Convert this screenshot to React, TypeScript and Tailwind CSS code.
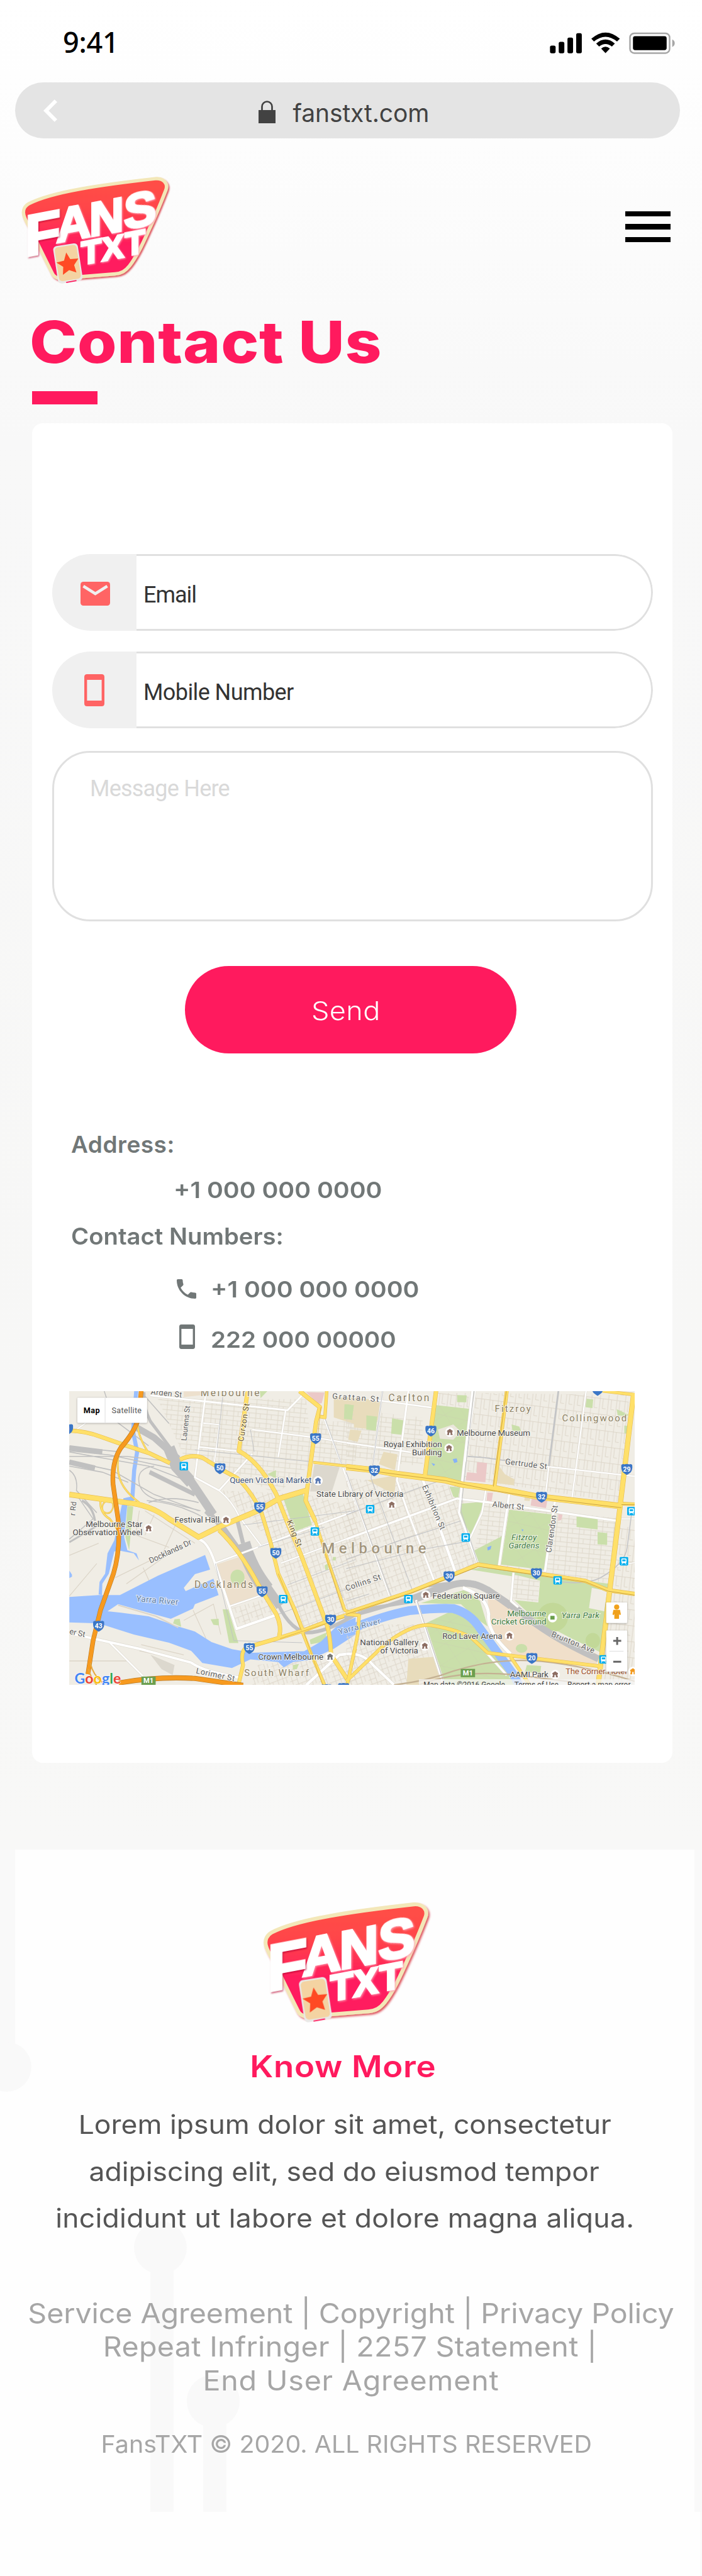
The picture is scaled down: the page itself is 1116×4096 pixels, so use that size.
import React from "react";

/* ---------- Brand badge ---------- */

const WHITE_LETTERS: [string, number, number, number][] = [
  ["A", 271, 477, 308],
  ["N", 484, 438, 308],
  ["S", 706, 391, 314],
  ["T", 432, 618, 209],
  ["X", 565, 594, 209],
  ["T", 714, 563, 209],
];

function Logo({ id, className }: { id: string; className: string }) {
  return (
    <svg viewBox="0 0 1050 780" className={className} role="img" aria-label="Fans TXT">
      <defs>
        <linearGradient id={`${id}-fill`} x1="0" y1="0" x2="0" y2="1">
          <stop offset="0.1" stopColor="#ff4d46" />
          <stop offset="0.3" stopColor="#ff4549" />
          <stop offset="0.68" stopColor="#ff1a5e" />
        </linearGradient>
        <filter id={`${id}-shadow`} x="-10%" y="-10%" width="125%" height="125%">
          <feDropShadow dx="8" dy="9" stdDeviation="5" floodColor="#d4202f" floodOpacity="0.75" />
        </filter>
        <filter id={`${id}-letters`} x="-20%" y="-20%" width="150%" height="150%">
          <feDropShadow dx="5" dy="8" stdDeviation="4" floodColor="#b8002e" floodOpacity="0.65" />
        </filter>
        <filter id={`${id}-glow`} x="-20%" y="-20%" width="150%" height="150%">
          <feDropShadow dx="5" dy="5" stdDeviation="5" floodColor="#ff9fb4" floodOpacity="0.9" />
        </filter>
      </defs>
      <path
        d="M96 226 C240 150 560 104 908 65 C962 60 992 98 976 138 C950 205 900 325 868 393 C835 465 800 550 742 626 C716 658 692 673 650 677 L290 706 C268 700 258 692 250 680 C215 610 160 500 112 398 C92 358 72 334 64 300 C56 268 70 240 96 226 Z"
        fill={`url(#${id}-fill)`}
        stroke="#f3e7b8"
        strokeWidth="22"
        filter={`url(#${id}-shadow)`}
      />
      <g fontFamily="'Liberation Sans', Arial, sans-serif" fontWeight="700" fill="#fff" stroke="#fff" strokeWidth="14">
        <g filter={`url(#${id}-glow)`}>
          {WHITE_LETTERS.map(([ch, x, y, size], i) => (
            <text key={i} transform={`matrix(1 -0.19 0 1 ${x} ${y})`} fontSize={size}>
              {ch}
            </text>
          ))}
        </g>
        <text transform="matrix(1 -0.19 0 1 71 563)" fontSize="376" filter={`url(#${id}-letters)`}>
          F
        </text>
      </g>
      <g transform="rotate(-8.8 347 610)">
        <rect x="267" y="488" width="160" height="243" rx="24" fill="#e9e9e7" />
        <rect x="276" y="497" width="142" height="220" rx="22" fill="#f4d3a2" />
      </g>
      <path d="M336 732 L402 720" stroke="#ff1a5e" strokeWidth="7" />
      <path
        d="M336 540 L362 582 L414 578 L387 620 L402 668 L355 653 L315 683 L317 631 L273 604 L322 592 Z"
        fill="#ff4a24"
      />
    </svg>
  );
}

/* ---------- Small icons ---------- */

function StatusIcons() {
  return (
    <svg viewBox="0 0 960 330" className="h-[82px] w-[238px]">
      <g fill="#000">
        <rect x="74" y="171" width="36" height="49" rx="11" />
        <rect x="130" y="147" width="36" height="73" rx="11" />
        <rect x="186" y="120" width="36" height="100" rx="11" />
        <rect x="242" y="91" width="36" height="129" rx="11" />
        <path d="M339 127 Q430 47 522 127 L504 145 Q430 84 356 145 Z" />
        <path d="M370 158 Q430 106 490 158 L471 177 Q430 144 389 177 Z" />
        <path d="M402 190 Q430 167 458 190 L430 219 Z" />
      </g>
      <rect x="587" y="92" width="254" height="127" rx="27" fill="none" stroke="#a6a6a6" strokeWidth="10" />
      <rect x="606" y="111" width="216" height="89" rx="14" fill="#000" />
      <path d="M858 132 Q874 140 874 156 Q874 172 858 180 Z" fill="#a6a6a6" />
    </svg>
  );
}

function PhoneDevice({ className }: { className: string }) {
  return (
    <svg viewBox="0 0 33 51" preserveAspectRatio="none" className={className} fill="currentColor">
      <path
        fillRule="evenodd"
        d="M4.5 0 H28.5 Q33 0 33 4.500 V46.500 Q33 51 28.500 51 H4.500 Q0 51 0 46.500 V4.500 Q0 0 4.500 0 Z M4.500 9 V42 H28.500 V9 Z"
      />
    </svg>
  );
}

/* ---------- Map ---------- */

type Pt = [number, number];
const westX = (x: number) => 140 + x * 0.39541;
const eastX = (x: number) => 740 + x * 0.40816;
const mapY = (y: number) => 2950 + y * 0.43367;
const W = (x: number, y: number): Pt => [westX(x), mapY(y)];
const E = (x: number, y: number): Pt => [eastX(x), mapY(y)];

const WEST = "translate(140 2950) scale(0.39541 0.43367)";
const EAST = "translate(740 2950) scale(0.40816 0.43367)";

type Road = [string, number];

const westWhite: Road[] = [
  ["M460 72 L1200 145 L1285 66", 10],
  ["M760 50 L700 475 L830 540 L1010 360", 10],
  ["M830 540 Q900 590 940 670 L1060 815", 8],
  ["M1190 145 L1150 375", 9],
  ["M720 325 L935 347", 8],
  ["M745 208 L832 216 L805 400", 7],
  ["M1010 240 L1350 280 L1568 312", 8],
  ["M725 782 Q770 795 805 890 L925 1222 L1150 1150", 14],
  ["M810 897 L950 850 L1568 640", 9],
  ["M890 1110 L1065 1055", 9],
  ["M1165 898 L1568 762", 8],
  ["M22 1243 L400 1320 L680 1388 Q740 1430 940 1462", 13],
  ["M240 1290 L420 1455", 9],
  ["M1300 1500 L1480 1350 L1568 1340", 15],
  ["M1395 178 L1500 430 L1568 610", 9],
  ["M60 240 L110 208", 7],
];

const westYellow: Road[] = [
  ["M22 245 Q110 248 190 275 L300 310 L450 355 L565 405", 18],
  ["M620 388 Q680 360 740 378 L850 440 L930 480 Q1010 550 1060 650 L1110 800 L1150 950 L1240 1130 L1285 1235", 18],
  ["M985 50 L937 345 Q1050 400 1140 560 L1200 700 L1270 850 L1400 1170 Q1430 1230 1435 1350 L1530 1480", 20],
  ["M1265 50 L1375 130 L1355 200 L1298 590 L1350 690", 20],
  ["M1350 690 L1420 890 L1510 1130 L1568 1155", 13],
  ["M1412 50 L1402 180 L1370 175", 15],
  ["M22 560 L330 600 Q460 610 560 680 L720 770 L830 720 L1040 640 L1155 580 L1300 540", 24],
  ["M830 735 Q940 830 1040 1000 L1140 1150 Q1170 1210 1155 1260", 20],
  ["M935 1498 L960 1400 Q940 1315 1000 1308 L1160 1265 L1280 1232 L1430 1180 L1568 1140", 18],
  ["M1280 1235 L1330 1350 L1400 1498", 15],
  ["M1340 402 L1568 425", 11],
  ["M385 220 L300 320 Q272 400 290 470 Q310 540 400 600", 7],
  ["M390 215 Q395 280 450 355", 7],
  ["M190 590 Q185 650 240 680 L280 730", 8],
  ["M228 592 Q262 590 258 622 Q250 655 222 652 Q196 645 200 620 Q205 595 228 592", 5],
  ["M1568 1320 L1520 1498", 12],
];

const eastWhite: Road[] = [
  ["M190 50 L140 410", 9],
  ["M325 50 L265 490 L320 640 L460 985", 11],
  ["M0 305 L340 352", 9],
  ["M660 50 L608 480 L590 650 L690 905", 12],
  ["M676 50 L624 400", 6],
  ["M0 780 L320 670 L580 580 L760 600 L1420 690", 11],
  ["M398 480 L570 940", 15],
  ["M855 540 L800 910", 13],
  ["M730 540 L710 650 L645 780", 9],
  ["M1095 570 L1040 940", 13],
  ["M1060 420 L1045 545", 8],
  ["M1255 50 L1180 585", 8],
  ["M1050 422 L1509 470", 8],
  ["M875 945 L862 1085 L900 1115", 11],
  ["M610 1020 Q735 1060 745 1150 Q735 1240 860 1345", 17],
  ["M365 1080 L510 1498", 11],
  ["M0 1345 Q90 1340 140 1400 L250 1498", 14],
  ["M120 90 L450 132", 9],
  ["M0 460 L225 1060", 7],
  ["M735 1340 L840 1450", 12],
  ["M1409 915 L1509 895", 6],
  ["M1440 680 L1509 680", 6],
];

const eastYellow: Road[] = [
  ["M470 50 L410 480", 20],
  ["M840 50 L775 525", 17],
  ["M0 425 L150 440 L270 460 L520 490 L610 512 L780 530 L1000 570 L1445 618", 28],
  ["M1440 605 L1509 608", 15],
  ["M1340 50 L1509 68", 13],
  ["M1504 60 L1430 640 L1380 1020 L1318 1498", 24],
  ["M0 1145 L340 1038 L690 905 L1250 985 L1370 1032 L1509 1050", 18],
  ["M0 1480 L200 1300 Q350 1190 450 1205 Q600 1230 660 1270 L740 1340 L1320 1405", 15],
  ["M68 1150 L60 1250 L5 1498", 15],
  ["M860 1360 L960 1498", 15],
  ["M0 1150 L70 1155", 14],
];

function Roads({ roads, color, casing }: { roads: Road[]; color: string; casing: string }) {
  return (
    <g fill="none" strokeLinejoin="round">
      {roads.map(([d, w], i) => (
        <path key={`c${i}`} d={d} stroke={casing} strokeWidth={w + 3} />
      ))}
      {roads.map(([d, w], i) => (
        <path key={`r${i}`} d={d} stroke={color} strokeWidth={w - 1} />
      ))}
    </g>
  );
}

const shields: [Pt, string][] = [
  [W(1352, 283), "55"],
  [W(835, 431), "50"],
  [W(1050, 623), "55"],
  [W(1137, 848), "50"],
  [W(1063, 1037), "55"],
  [W(180, 1207), "43"],
  [W(1433, 1177), "30"],
  [W(994, 1317), "55"],
  [W(1410, 1520), ""],
  [W(1503, 1514), "20"],
  [W(12, 238), "0"],
  [E(443, 246), "46"],
  [E(147, 442), "32"],
  [E(1022, 572), "32"],
  [E(1468, 435), "29"],
  [E(538, 963), "30"],
  [E(995, 948), "30"],
  [E(971, 1366), "20"],
  [E(1315, 45), ""],
];

const stations: Pt[] = [
  W(640, 420),
  W(1348, 742),
  W(1177, 1075),
  E(125, 632),
  E(625, 772),
  E(325, 1075),
  E(1106, 983),
  E(1453, 889),
  E(1492, 642),
  E(1346, 1372),
];

const places: [Pt, string][] = [
  [W(1365, 492), "#5b7bb4"],
  [W(868, 686), "#8d6e63"],
  [W(450, 727), "#8d6e63"],
  [W(1430, 1360), "#777777"],
  [E(542, 253), "#8d6e63"],
  [E(538, 332), "#8d6e63"],
  [E(238, 611), "#8d6e63"],
  [E(416, 1055), "#8d6e63"],
  [E(411, 1306), "#8d6e63"],
  [E(854, 1256), "#8d6e63"],
  [E(1093, 1447), "#8d6e63"],
  [E(1079, 1167), "#6a9f4b"],
  [E(1500, 1432), "#f29a1f"],
];

/* text, start, length, size, colour, style, angle */
type Label = [string, Pt, number, number, string, string?, number?];
const DARK = "#4c4c4c";
const TAN = "#8c7f62";
const STREET = "#5f5f5f";
const GREEN = "#3f7d3f";

const labels: Label[] = [
  ["Arden St", W(460, 66), 67, 17, STREET, "", 6],
  ["Melbourne", W(730, 75), 126, 21, TAN],
  ["Laurens St", W(654, 296), 75, 16, STREET, "", -84],
  ["Curzon St", W(962, 300), 82, 17, "#6d5a2a", "", -81],
  ["Grattan St", W(1441, 88), 100, 17, STREET, "", 4],
  ["Queen Victoria Market", W(888, 502), 175, 18, "#44597f"],
  ["State Library of Victoria", W(1356, 572), 186, 18, DARK],
  ["Festival Hall", W(590, 699), 96, 18, DARK],
  ["Melbourne Star", W(110, 720), 121, 18, DARK],
  ["Observation Wheel", W(40, 761), 149, 18, DARK],
  ["r Rd", W(52, 665), 30, 16, STREET, "", -84],
  ["Docklands Dr", W(460, 900), 98, 17, STREET, "", -25],
  ["King St", W(1196, 692), 60, 17, "#6d5a2a", "", 68],
  ["Docklands", W(697, 1020), 125, 21, TAN],
  ["Yarra River", W(382, 1086), 90, 18, "#5a7ba8", "", 5],
  ["er St", W(20, 1246), 34, 17, STREET, "", 12],
  ["Lorimer St", W(704, 1440), 84, 17, STREET, "", 12],
  ["Crown Melbourne", W(1042, 1374), 139, 18, DARK],
  ["South Wharf", W(966, 1453), 138, 20, TAN],
  ["Melbourne", W(1385, 850), 223, 32, "#a3967d", "bold"],
  ["Collins St", W(1518, 1036), 79, 17, STREET, "", -19],
  ["Yarra River", W(1480, 1250), 92, 17, "#5a7ba8", "", -15],
  ["Carlton", E(221, 99), 87, 21, TAN],
  ["Fitzroy", E(777, 154), 77, 20, TAN],
  ["Collingwood", E(1129, 199), 138, 20, TAN],
  ["Melbourne Museum", E(578, 270), 157, 18, DARK],
  ["Royal Exhibition", E(195, 325), 125, 18, DARK],
  ["Building", E(344, 367), 64, 18, DARK],
  ["Gertrude St", E(830, 410), 90, 17, STREET, "", 7],
  ["Exhibition St", E(396, 520), 102, 17, STREET, "", 67],
  ["Albert St", E(763, 620), 68, 17, STREET, "", 6],
  ["Fitzroy", E(864, 784), 54, 18, GREEN, "italic"],
  ["Gardens", E(849, 824), 66, 18, GREEN, "italic"],
  ["Clarendon St", E(1072, 848), 102, 17, STREET, "", -82],
  ["Federation Square", E(451, 1072), 144, 18, DARK],
  ["Melbourne", E(842, 1160), 83, 18, GREEN],
  ["Cricket Ground", E(758, 1200), 118, 18, GREEN],
  ["Yarra Park", E(1126, 1168), 81, 18, GREEN, "italic"],
  ["Rod Laver Arena", E(503, 1272), 128, 18, DARK],
  ["Brunton Ave", E(1070, 1258), 98, 17, STREET, "", 22],
  ["National Gallery", E(72, 1301), 125, 18, DARK],
  ["of Victoria", E(178, 1342), 81, 18, DARK],
  ["AAMI Park", E(857, 1461), 82, 18, DARK],
  ["The Corner Hotel", E(1147, 1446), 131, 18, "#a0522d"],
];

function CityMap() {
  return (
    <svg
      viewBox="148.300 2972 1207.700 627.500"
      preserveAspectRatio="none"
      className="block h-[467px] w-[899px]"
      fontFamily="Roboto, sans-serif"
    >
      <defs>
        <pattern id="grid-north" width="60" height="46" patternUnits="userSpaceOnUse" patternTransform="rotate(5)">
          <path d="M0 2 H60 M20 2 V46 M44 24 V46 M0 24 H60" stroke="#dcd5c8" strokeWidth="3" fill="none" />
        </pattern>
        <pattern id="grid-city" width="74" height="52" patternUnits="userSpaceOnUse" patternTransform="rotate(-19)">
          <path d="M0 2 H74 M0 30 H40 M12 2 V52 M40 2 V52 M58 2 V30" stroke="#dcd5c8" strokeWidth="3" fill="none" />
        </pattern>
        <pattern id="grid-dense" width="44" height="78" patternUnits="userSpaceOnUse" patternTransform="rotate(7)">
          <path d="M0 2 H44 M10 0 V78 M26 2 V50 M26 50 H44" stroke="#dcd5c8" strokeWidth="3" fill="none" />
        </pattern>
        <pattern id="grid-park" width="120" height="110" patternUnits="userSpaceOnUse" patternTransform="rotate(12)">
          <path d="M0 0 L120 110 M120 0 L0 110 M0 60 H120" stroke="#cbd5ae" strokeWidth="2" fill="none" />
        </pattern>
      </defs>
      <rect x="140" y="2960" width="1230" height="650" fill="#f0ede5" />

      {/* western half */}
      <g transform={WEST}>
        <path d="M500 90 L1300 90 L1340 400 L1140 560 L930 460 L640 370 Z" fill="url(#grid-north)" />
        <path d="M1340 200 L1568 200 L1568 420 L1340 400 Z" fill="url(#grid-north)" />
        <path d="M840 540 L1300 560 L1568 620 L1568 1140 L1280 1230 L1120 800 Z" fill="url(#grid-city)" />
        <path d="M900 1120 L1100 1070 L1130 1160 L930 1215 Z" fill="url(#grid-city)" />
        <path d="M1040 1400 L1568 1330 L1568 1498 L1000 1498 Z" fill="url(#grid-city)" />
        <path
          d="M270 970 L470 880 M330 1000 L640 800 M430 640 L700 800 M400 640 L380 760 L560 820 M420 920 L460 1000 M22 860 L180 800 M22 1060 L170 900 M600 700 L520 860 M480 660 L430 760 M22 1380 L340 1380 M410 1300 L640 1350 M400 1330 L600 1370 M640 1180 L800 1100 L840 1250 M690 1130 L760 1270"
          stroke="#dcd5c8"
          strokeWidth="4"
          fill="none"
        />
        <path d="M1450 78 L1568 90 L1568 215 L1450 180 Z" fill="#e8dcbc" />
        <path d="M1300 55 L1400 58 L1385 110 L1365 112 Z" fill="#ebc9c8" />
        <path d="M815 905 L940 868 L1010 960 L1060 1050 L890 1108 Z" fill="#ede0cd" />
        <path d="M1345 412 L1482 424 L1440 545 L1322 545 Z" fill="#dcd8ce" />
        <path d="M460 1350 L590 1400 L580 1450 L520 1420 Z" fill="#dcd8ce" />
        <path d="M640 52 L760 52 L740 70 L640 80 Z" fill="#ede0cd" />
        <g fill="#cadfaa">
          <path d="M1180 585 L1283 555 L1332 710 L1240 742 Z" />
          <circle cx="930" cy="968" r="38" />
          <path d="M850 1125 L880 1127 L935 1292 L885 1292 Z" />
          <path d="M590 1175 L618 1172 L626 1212 L582 1195 Z" />
          <path d="M335 615 L367 620 L358 700 L345 835 L325 770 Z" />
          <path d="M1090 460 L1138 440 L1138 480 Z" />
          <path d="M1320 1275 L1412 1240 L1402 1285 L1325 1298 Z" />
          <path d="M1050 50 L1092 50 L1055 85 Z" />
          <path d="M1508 115 L1550 118 L1548 192 L1505 188 Z" />
          <path d="M785 1175 L828 1172 L830 1205 L800 1202 Z" />
          <path d="M1400 910 L1418 900 L1420 930 L1405 932 Z" />
          <path d="M1445 868 L1462 868 L1460 885 L1445 885 Z" />
          <path d="M1230 1400 L1262 1395 L1250 1420 L1228 1422 Z" />
        </g>
        <g fill="#99bfff">
          <path d="M22 1065 L180 1055 L295 1055 L500 960 L755 858 L782 930 L700 952 L640 1020 L650 1036 L800 975 L828 1055 L700 1100 L690 1122 L570 1172 L480 1150 L285 1100 L228 1135 L300 1142 L450 1160 L610 1210 L700 1235 L790 1287 L900 1322 L1010 1340 L1290 1332 L1380 1285 L1470 1205 L1568 1165 L1568 1250 L1450 1320 L1320 1375 L1230 1385 L1180 1412 L1150 1385 L1000 1372 L900 1415 L740 1390 L680 1330 L560 1290 L370 1250 L180 1195 L22 1190 Z" />
          <path d="M305 612 L335 608 L318 770 L335 835 L385 850 L398 885 L370 850 L300 838 L265 840 L235 950 L200 1000 L198 1055 L180 1052 L185 990 L215 950 L228 850 L265 785 Z" />
          <path d="M22 935 L36 955 L36 965 L22 972 Z" />
        </g>
        <path d="M383 50 L366 250 L388 350 L372 440 L362 580 L315 590" stroke="#99bfff" strokeWidth="22" fill="none" />
        <path d="M285 1105 L490 1160 L610 1215" stroke="#dcd5c8" strokeWidth="6" fill="none" />
        {/* railway lands */}
        <g fill="none" stroke="#c0c0c0">
          <path
            d="M22 345 L240 365 L420 400 L620 440 M22 325 L300 350 M22 372 L330 372 L600 400 M22 395 L250 440 L480 560 L720 640 M22 420 L200 450 L340 500 M22 350 L200 380 L450 420 L620 480 M400 510 Q380 430 480 420 M400 510 Q420 580 560 600 L730 640 M450 600 Q560 560 720 600 M440 590 Q600 600 740 670 M22 440 Q70 470 60 540 L170 650 M210 50 L260 190 L450 320 M60 560 L150 680 L22 780 M415 60 L560 210"
            strokeWidth="5"
          />
          <path d="M22 330 L200 350 M22 400 L160 430" strokeWidth="26" />
          <path d="M90 590 Q150 620 160 690" strokeWidth="12" />
          <path d="M22 795 L170 715" strokeWidth="9" />
          <path d="M425 55 Q420 130 460 200 L600 370" strokeWidth="16" />
          <path d="M375 225 L480 280 L610 385" strokeWidth="34" />
          <path d="M560 330 L600 420 L680 500" strokeWidth="62" />
          <path d="M455 450 L700 560" strokeWidth="22" />
          <path d="M660 470 L800 660" strokeWidth="44" />
          <path d="M760 640 L850 720 L960 860" strokeWidth="28" />
          <path d="M930 690 L960 800" strokeWidth="22" />
          <path d="M960 800 Q1000 930 1090 1030" strokeWidth="78" />
          <path d="M1060 980 L1160 1110" strokeWidth="48" />
          <path d="M1130 1060 Q1200 1220 1300 1240 Q1400 1245 1568 1150" strokeWidth="18" />
        </g>
        <Roads roads={westWhite} color="#ffffff" casing="#dedad0" />
        <path
          d="M850 80 L820 330 M1400 180 L1500 430 M1000 240 L1020 350 M700 340 L1340 400 M960 710 L1568 640 M1040 820 L1400 720 M1150 1150 L1568 1010 M1350 700 L1500 1070 M810 900 L910 1280 L1280 1290 M1200 1005 L1568 880"
          stroke="#bfc1c4"
          strokeWidth="3"
          fill="none"
        />
        <Roads roads={westYellow} color="#ffe069" casing="#e6bc50" />
        <path
          d="M1380 130 L1360 300 M1380 780 L1500 1130 M1150 950 L1275 1230 M1160 1270 L1568 1148 M1290 1245 L1390 1498"
          stroke="#d7a93c"
          strokeWidth="2.500"
          fill="none"
        />
        <Roads
          roads={[
            ["M410 50 L398 170 Q385 240 300 330 Q250 400 258 510 L285 680 Q300 830 260 950 L190 1130 L150 1280 L122 1445", 22],
            ["M290 1488 Q500 1455 700 1466 L960 1500", 22],
          ]}
          color="#f79a1f"
          casing="#b97a25"
        />
        <path d="M135 1390 Q150 1450 200 1485 M125 1420 Q140 1470 170 1498" stroke="#e6a93c" strokeWidth="7" fill="none" />
      </g>

      {/* eastern half */}
      <g transform={EAST}>
        <path d="M0 140 L400 180 L400 420 L0 380 Z" fill="url(#grid-north)" />
        <path d="M0 480 L600 520 L680 900 L0 1120 Z" fill="url(#grid-city)" />
        <path d="M650 60 L1480 70 L1440 600 L620 480 Z" fill="url(#grid-dense)" />
        <path d="M480 60 L640 60 L640 140 L480 120 Z" fill="url(#grid-dense)" />
        <path d="M720 600 L1440 680 L1380 1000 L660 890 Z" fill="url(#grid-north)" />
        <path d="M880 960 L1005 980 L1000 1090 L870 1070 Z" fill="url(#grid-north)" />
        <path d="M1400 720 L1509 720 L1509 1498 L1340 1498 Z" fill="url(#grid-dense)" />
        <path d="M0 1200 L400 1200 L460 1498 L0 1498 Z" fill="url(#grid-city)" />
        <g fill="#e8dcbc">
          <path d="M40 85 L180 95 L165 190 L140 240 L40 230 Z" />
          <path d="M0 80 L40 85 L40 120 L0 115 Z" />
          <path d="M110 490 L262 465 L252 560 Z" />
          <path d="M195 350 L268 362 L255 440 L170 410 Z" />
          <path d="M20 240 L80 245 L60 300 L10 290 Z" />
          <path d="M800 420 L830 460 L880 485 L878 515 L790 505 Z" />
          <path d="M325 1370 L455 1360 L500 1498 L315 1498 Z" />
          <path d="M935 560 L965 565 L960 592 L932 590 Z" />
        </g>
        <g fill="#ebc9c8">
          <path d="M685 400 L737 405 L728 500 L625 490 L632 450 L682 455 Z" />
          <path d="M970 578 L1052 590 L1045 627 L965 615 Z" />
          <path d="M738 550 L768 552 L760 595 L735 590 Z" />
          <path d="M1110 655 L1132 660 L1125 685 L1108 690 Z" />
        </g>
        <path d="M740 1075 L870 1090 L1000 1200 L1310 1345 L1312 1400 L860 1350 L755 1240 Z" fill="#f0dfca" />
        <g fill="#cadfaa">
          <path d="M470 120 L648 138 L606 495 L420 462 Z" />
          <path d="M600 605 L722 595 L655 765 L595 665 Z" />
          <path d="M540 520 L595 525 L585 580 L560 570 Z" />
          <path d="M665 838 L815 765 L802 912 L690 900 Z" />
          <path d="M852 635 L1075 658 L1042 932 L810 905 Z" />
          <path d="M1205 668 L1316 680 L1315 732 L1205 720 Z" />
          <path d="M1315 745 L1365 750 L1365 808 L1315 805 Z" />
          <path d="M240 185 L300 195 L290 266 L235 260 Z" />
          <path d="M105 170 L162 176 L155 246 L105 240 Z" />
          <path d="M0 115 L40 120 L30 192 L0 188 Z" />
          <path d="M580 70 L630 72 L628 106 L580 105 Z" />
          <path d="M1258 88 L1292 92 L1288 134 L1252 130 Z" />
          <path d="M1415 140 L1475 165 L1470 175 L1420 170 Z" />
          <path d="M1455 220 L1478 222 L1475 260 L1455 258 Z" />
          <path d="M865 215 L905 225 L915 248 L870 245 Z" />
          <path d="M650 930 L1015 985 L1005 1092 L880 1080 L1000 1185 L1330 1335 L1370 1000 L1000 950 L700 920 Z" />
          <path d="M1015 975 L1370 1000 L1325 1335 L1180 1270 L1000 1180 Z" />
          <path d="M415 1195 L560 1130 L700 1210 L840 1400 L890 1498 L520 1498 Z" />
          <path d="M390 1095 L620 1030 L700 1085 L740 1210 L680 1170 L600 1100 Z" />
          <path d="M945 1400 L1020 1405 L1015 1440 L935 1435 Z" />
        </g>
        <path d="M415 1195 L560 1130 L700 1210 L840 1400 L890 1498 L520 1498 Z" fill="url(#grid-park)" />
        <path d="M470 120 L648 138 L606 495 L420 462 Z" fill="url(#grid-park)" />
        <path d="M852 635 L1075 658 L1042 932 L810 905 Z" fill="url(#grid-park)" />
        <path d="M880 955 L1012 985 L1002 1090 L872 1070 Z" fill="#f0ede5" />
        <path d="M880 955 L1012 985 L1002 1090 L872 1070 Z" fill="url(#grid-north)" />
        <path d="M480 240 L560 215 L600 250 L560 290 L490 285 Z" fill="#ebe7dc" />
        <path d="M1285 1020 L1365 1035 L1350 1135 L1270 1120 Z" fill="#f0ede5" />
        <ellipse cx="1080" cy="1165" rx="80" ry="72" fill="#c2d898" />
        <circle cx="1290" cy="1280" r="38" fill="#c2d898" />
        <ellipse cx="917" cy="1318" rx="30" ry="22" fill="#cadfaa" />
        <g fill="#86b1f7">
          <path d="M557 385 L578 382 L582 400 L565 405 Z" />
          <path d="M445 405 L465 410 L458 420 Z" />
          <path d="M738 820 L760 812 L755 830 L740 836 Z" />
          <path d="M918 730 L928 735 L920 742 Z" />
        </g>
        <path
          d="M-10 1235 Q180 1160 330 1132 Q480 1118 560 1122 Q650 1145 700 1220 L870 1440 L905 1500"
          stroke="#99bfff"
          strokeWidth="44"
          fill="none"
        />
        <g fill="none" stroke="#c0c0c0">
          <path d="M-10 1165 Q200 1120 400 1045 Q560 980 680 995" strokeWidth="18" />
          <path d="M350 1080 L540 1010 Q640 975 740 1030 L860 1110" strokeWidth="34" />
          <path d="M740 1030 L900 1130 Q1060 1260 1320 1370" strokeWidth="34" />
          <path d="M430 1010 L620 990 M60 1130 L330 1090" strokeWidth="16" />
        </g>
        <Roads roads={eastWhite} color="#ffffff" casing="#dedad0" />
        <g fill="none" stroke="#c3c4c6" strokeWidth="3.500">
          <path d="M1110 50 L1060 420" strokeWidth="9" />
          <path d="M635 372 L720 378 L850 395" strokeWidth="6" />
          <path d="M190 50 L130 480 L345 1030 M0 660 L400 520 L500 490 M0 925 L400 830 L640 790 M600 690 L300 780 L0 880 M668 50 L600 640 L690 905 M370 1085 L515 1498 M0 1085 L120 1050 M0 450 L40 560 L235 1060" />
          <path d="M1080 985 Q1250 1010 1330 970 Q1460 900 1470 820 L1492 660" strokeWidth="5" />
        </g>
        <path
          d="M250 1498 Q420 1480 560 1430 Q760 1370 960 1378 Q1200 1390 1509 1480 M380 1498 Q600 1420 900 1450 L1300 1498"
          stroke="#c4b193"
          strokeWidth="7"
          fill="none"
        />
        <Roads roads={eastYellow} color="#ffe069" casing="#e6bc50" />
        <path
          d="M0 428 L520 492 L780 542 L1000 575 L1440 625 M838 50 L770 520 M0 1150 L340 1045 L690 915 L1250 990 L1370 1036 L1509 1056 M1440 610 L1509 610"
          stroke="#c9a040"
          strokeWidth="3"
          fill="none"
        />
      </g>

      {/* road numbers */}
      {shields.map(([[x, y], n], i) => (
        <g key={i} transform={`translate(${x} ${y})`}>
          <path
            d="M-11.500 -9 Q-8 -12 -5 -10 Q0 -12 5 -10 Q8 -12 11.500 -9 Q13 2 8 7 Q3 11 0 12.500 Q-3 11 -8 7 Q-13 2 -11.500 -9 Z"
            fill="#3b76c6"
          />
          <text y="5" textAnchor="middle" fontSize="14" fontWeight="700" fill="#fff">
            {n}
          </text>
        </g>
      ))}
      {(
        [
          [W(411, 1457), W(488, 1498)],
          [E(599, 1419), E(674, 1460)],
        ] as [Pt, Pt][]
      ).map(([a, b], i) => (
        <g key={i}>
          <rect x={a[0]} y={a[1]} width={b[0] - a[0]} height={b[1] - a[1]} fill="#6b9f4f" />
          <text x={(a[0] + b[0]) / 2} y={b[1] - 3.5} textAnchor="middle" fontSize="15" fontWeight="700" fill="#fff">
            M1
          </text>
        </g>
      ))}

      {/* tram and train stops */}
      {stations.map(([x, y], i) => (
        <g key={i} transform={`translate(${x} ${y})`}>
          <rect x="-9" y="-9" width="18" height="18" rx="2" fill="#00aeef" />
          <rect x="-5.500" y="-6" width="11" height="10" rx="2" fill="#fff" />
          <rect x="-3.500" y="-4" width="7" height="4" fill="#00aeef" />
          <path d="M-3 4 L-5 7 M3 4 L5 7" stroke="#fff" strokeWidth="1.500" />
        </g>
      ))}

      {/* points of interest */}
      {places.map(([[x, y], c], i) => (
        <g key={i} transform={`translate(${x} ${y})`}>
          <circle r="10" fill="#fff" />
          {c === "#6a9f4b" ? (
            <rect x="-4.500" y="-4" width="9" height="8" fill={c} />
          ) : (
            <path d="M-6 6 V4 H-5 V-1 H-6 V-3 L0 -7 L6 -3 V-1 H5 V4 H6 V6 H1.500 V1 H-1.500 V6 Z" fill={c} />
          )}
        </g>
      ))}

      {/* labels */}
      {labels.map(([text, [x, y], len, size, color, style, angle], i) => (
        <text
          key={i}
          transform={`translate(${x} ${y}) rotate(${angle ?? 0})`}
          fontSize={size}
          fontStyle={style === "italic" ? "italic" : "normal"}
          fontWeight={style === "bold" ? 500 : 400}
          textLength={len}
          fill={color}
          stroke="#fbfaf6"
          strokeOpacity="0.85"
          strokeWidth="2.500"
          paintOrder="stroke"
        >
          {text}
        </text>
      ))}

      {/* wordmark */}
      <text
        x={westX(50)}
        y={mapY(1493)}
        fontSize="31"
        textLength="99"
        fontFamily="Lato, sans-serif"
        stroke="#fff"
        strokeWidth="1.500"
        paintOrder="stroke"
        fontWeight="700"
      >
        <tspan fill="#4285f4">G</tspan>
        <tspan fill="#ea4335">o</tspan>
        <tspan fill="#fbbc05">o</tspan>
        <tspan fill="#4285f4">g</tspan>
        <tspan fill="#34a853">l</tspan>
        <tspan fill="#ea4335">e</tspan>
      </text>

      {/* attribution strip, cut by the lower edge */}
      <rect x={eastX(380)} y={mapY(1470)} width="470" height="14" fill="#f5f5f5" opacity="0.75" />
      <g fontSize="16" fill="#444">
        <text x={eastX(404)} y={mapY(1511)} textLength="174">
          Map data ©2016 Google
        </text>
        <text x={eastX(880)} y={mapY(1511)} textLength="94">
          Terms of Use
        </text>
        <text x={eastX(1157)} y={mapY(1511)} textLength="135">
          Report a map error
        </text>
      </g>

      {/* map type switch, street view figure and zoom buttons */}
      <g filter="drop-shadow(0 1px 2px rgba(0,0,0,0.3))">
        <rect x={westX(65)} y={mapY(83)} width="149" height="54" rx="2" fill="#fff" />
        <rect x={eastX(1360)} y={mapY(1092)} width="45" height="44" rx="2" fill="#fff" />
        <rect x={eastX(1360)} y={mapY(1230)} width="45" height="88" rx="2" fill="#fff" />
      </g>
      <path d={`M${westX(215)} ${mapY(83)} v54`} stroke="#e2e2e2" strokeWidth="1.500" />
      <text x={westX(98)} y={mapY(158)} fontSize="17" fontWeight="700" textLength="35" fill="#000">
        Map
      </text>
      <text x={westX(250)} y={mapY(158)} fontSize="17" textLength="64" fill="#565656">
        Satellite
      </text>
      <g transform={`translate(${eastX(1415)} ${mapY(1140)})`} fill="#f0a11c">
        <circle cx="0" cy="-11" r="5.500" />
        <path d="M-7 -5 H7 L9 5 L6 6 L5 3 V14 H-5 V3 L-6 6 L-9 5 Z" />
      </g>
      <path
        d={`M${eastX(1397)} ${mapY(1281)} h17 M${eastX(1417.5)} ${mapY(1262)} v17 M${eastX(1397)} ${mapY(1384)} h17`}
        stroke="#666"
        strokeWidth="4"
      />
      <path d={`M${eastX(1377)} ${mapY(1332)} h30`} stroke="#e0e0e0" strokeWidth="1.500" />
    </svg>
  );
}

/* ---------- Page ---------- */

function Field({ icon, children }: { icon: React.ReactNode; children: React.ReactNode }) {
  return (
    <div className="flex h-[122px] overflow-hidden rounded-full">
      <div className="flex w-[134px] shrink-0 items-center bg-[#f0f0f0]">{icon}</div>
      <div className="flex flex-1 items-center rounded-r-full border-[3px] border-l-0 border-[#e0e0e0] pt-[8px] pl-[11px] font-['Roboto',sans-serif] text-[36px] leading-[40px] text-[#333]">
        {children}
      </div>
    </div>
  );
}

export default function App() {
  return (
    <div className="flex h-[4096px] w-[1116px] flex-col overflow-hidden bg-[linear-gradient(180deg,#ffffff_0px,#fdfdfd_230px,#f9f9f9_580px,#f8f8f8_700px,#f7f7f6_2200px,#f8f8f7_2940px)] font-['Inter',sans-serif]">
      <div className="flex h-[131px] shrink-0 items-center justify-between pr-[22px] pl-[100px]">
        <span className="mt-[2px] font-['Noto_Sans',sans-serif] text-[45px] leading-[60px] font-medium tracking-[-0.24px] text-black">
          9:41
        </span>
        <div className="mt-[11px]">
          <StatusIcons />
        </div>
      </div>

      <div className="ml-[23.5px] flex h-[89px] w-[1057px] shrink-0 items-center rounded-full bg-[#e4e4e4]">
        <svg viewBox="0 0 22 36" className="ml-[45px] h-[36px] w-[22px]">
          <path d="M17.700 0.200 L22 4.200 L8.300 18 L22 31.700 L17.700 35.700 L0 18 Z" fill="#fff" />
        </svg>
        <svg viewBox="0 0 27 36" className="mt-[5px] ml-[320px] h-[36px] w-[27px]">
          <rect y="15" width="27" height="21" fill="#424242" />
          <path d="M5.500 16 V9.500 A8 8 0 0 1 21.500 9.500 V16" fill="none" stroke="#424242" strokeWidth="2.700" />
        </svg>
        <span className="mt-[8px] ml-[28px] text-[39px] leading-[44px] tracking-[-0.1px] text-[#424242]">fanstxt.com</span>
      </div>

      <header className="flex h-[276px] shrink-0 items-start justify-between pt-[48px] pr-[50.5px] pl-[22px]">
        <Logo id="head" className="h-[193px] w-[260px]" />
        <div className="mt-[67.500px] flex w-[72px] flex-col gap-[12px]">
          <span className="h-[8.500px] bg-black" />
          <span className="h-[8.500px] bg-black" />
          <span className="h-[8.500px] bg-black" />
        </div>
      </header>

      <h1 className="ml-[47px] h-[96px] shrink-0 origin-left scale-x-110 self-start text-[92px] leading-[96px] font-extrabold tracking-[0.6px] whitespace-nowrap text-[#ff1a5e]">
        Contact Us
      </h1>
      <div className="mt-[30px] ml-[50.5px] h-[21px] w-[104px] shrink-0 bg-[#ff1a5e]" />

      <main className="mt-[30px] ml-[50.5px] flex h-[2130px] w-[1018px] shrink-0 flex-col rounded-[17px] bg-white px-[32.500px] pt-[208px]">
        <form className="flex w-[955px] flex-col">
          <Field
            icon={
              <svg viewBox="0 0 47 38" className="mt-[3px] ml-[45px] h-[38px] w-[47px]">
                <rect width="47" height="38" rx="4.500" fill="#ff6464" />
                <path d="M4.500 7 L23.500 19 L42.500 7" fill="none" stroke="#f0f0f0" strokeWidth="4.500" />
              </svg>
            }
          >
            <span className="tracking-[-1px]">Email</span>
          </Field>
          <div className="h-[33px]" />
          <Field icon={<PhoneDevice className="ml-[51px] h-[51px] w-[32px] text-[#ff6464]" />}>
            <span className="tracking-[-0.59px]">Mobile Number</span>
          </Field>
          <div className="mt-[35.500px] h-[271px] rounded-[60px] border-[3px] border-[#e0e0e0] pt-[37px] pl-[57px] font-['Roboto',sans-serif] text-[36px] leading-[40px] tracking-[-0.78px] text-[#d9d9d9]">
            Message Here
          </div>
          <button
            type="button"
            className="mt-[71px] ml-[211px] flex h-[139px] w-[527px] items-center rounded-full bg-[#ff1a5e] pt-[4px] pl-[201px] text-[41px] leading-[44px] font-light text-white"
          >
            <span className="origin-left scale-x-110 tracking-[0.3px]">Send</span>
          </button>
        </form>

        <section className="flex flex-col items-start pl-[30px] leading-[40px] font-semibold whitespace-nowrap text-[#717777]">
          <p className="mt-[125px] text-[37px] tracking-[0.5px]">Address:</p>
          <p className="mt-[32px] ml-[163px] origin-left scale-x-[1.09] text-[36px]">+1 000 000 0000</p>
          <p className="mt-[34px] origin-left scale-x-[1.034] text-[37px]">Contact Numbers:</p>
          <div className="mt-[44px] flex h-[40px] items-center pl-[168px]">
            <svg viewBox="3 3 18 18" className="h-[31px] w-[31px]" fill="currentColor">
              <path d="M6.620 10.790c1.440 2.830 3.760 5.140 6.590 6.590l2.200-2.200c.27-.27.67-.36 1.020-.24 1.120.37 2.330.57 3.570.57.55 0 1 .45 1 1V20c0 .55-.45 1-1 1-9.390 0-17-7.610-17-17 0-.55.45-1 1-1h3.500c.55 0 1 .45 1 1 0 1.250.2 2.450.57 3.570.11.35.03.74-.25 1.020l-2.200 2.200z" />
            </svg>
            <span className="ml-[23px] origin-left scale-x-[1.09] text-[36px]">+1 000 000 0000</span>
          </div>
          <div className="mt-[40px] flex h-[40px] items-center pl-[172px]">
            <PhoneDevice className="-mt-[8px] h-[39px] w-[25px]" />
            <span className="ml-[25px] origin-left scale-x-[1.07] text-[36px]">222 000 00000</span>
          </div>
        </section>

        <div className="mt-[62px] ml-[27px]">
          <CityMap />
        </div>
      </main>

      <footer className="relative mt-[138px] flex flex-1 flex-col items-center bg-[#fefefe]">
        <div className="absolute inset-0 overflow-hidden">
          <div className="absolute top-0 left-0 h-[346px] w-[24px] bg-[#f9f9f9]" />
          <div className="absolute top-[306px] left-[-29.5px] size-[79px] rounded-full bg-[#f9f9f9]" />
          <div className="absolute top-0 right-0 h-[1053px] w-[12px] bg-[#f9f9f9]" />
          <div className="absolute right-0 bottom-0 h-[102px] w-[3px] bg-[#fafafa]" />
          <div className="absolute top-[591px] left-[213px] size-[84px] rounded-full bg-[#f9f9f9]" />
          <div className="absolute top-[633px] left-[239px] h-[420px] w-[36.5px] bg-[#f9f9f9]" />
          <div className="absolute top-[835px] left-[297px] size-[84px] rounded-full bg-[#f9f9f9]" />
          <div className="absolute top-[877px] left-[323px] h-[176px] w-[36.5px] bg-[#f9f9f9]" />
        </div>

        <div className="relative flex w-full flex-col text-center whitespace-nowrap">
          <Logo id="foot" className="mt-[69px] ml-[404.5px] h-[217px] w-[292px]" />
          <h2 className="mt-[28.500px] scale-x-110 pr-[23px] text-[48px] leading-[60px] font-semibold tracking-[0.6px] text-[#ff1a5e]">
            Know More
          </h2>
          <div className="mt-[25.500px] scale-x-[1.085] pr-[18px] text-[41px] leading-[74.700px] text-[#555]">
            <p>Lorem ipsum dolor sit amet, consectetur</p>
            <p className="pr-[2px]">adipiscing elit, sed do eiusmod tempor</p>
            <p className="tracking-[0.27px]">incididunt ut labore et dolore magna aliqua.</p>
          </div>
          <div className="mt-[86.500px] scale-x-[1.06] text-[44px] leading-[53.700px] text-[#a6a6a6]">
            <p className="-mx-4 tracking-[-0.09px]">Service Agreement | Copyright | Privacy Policy</p>
            <p className="pr-[3px] tracking-[0.28px]">Repeat Infringer | 2257 Statement |</p>
            <p className="tracking-[0.72px]">End User Agreement</p>
          </div>
          <p className="mt-[46px] scale-x-[1.037] pr-[14px] text-[38px] leading-[54px] text-[#a6a6a6]">
            FansTXT © 2020. ALL RIGHTS RESERVED
          </p>
        </div>
      </footer>
    </div>
  );
}
